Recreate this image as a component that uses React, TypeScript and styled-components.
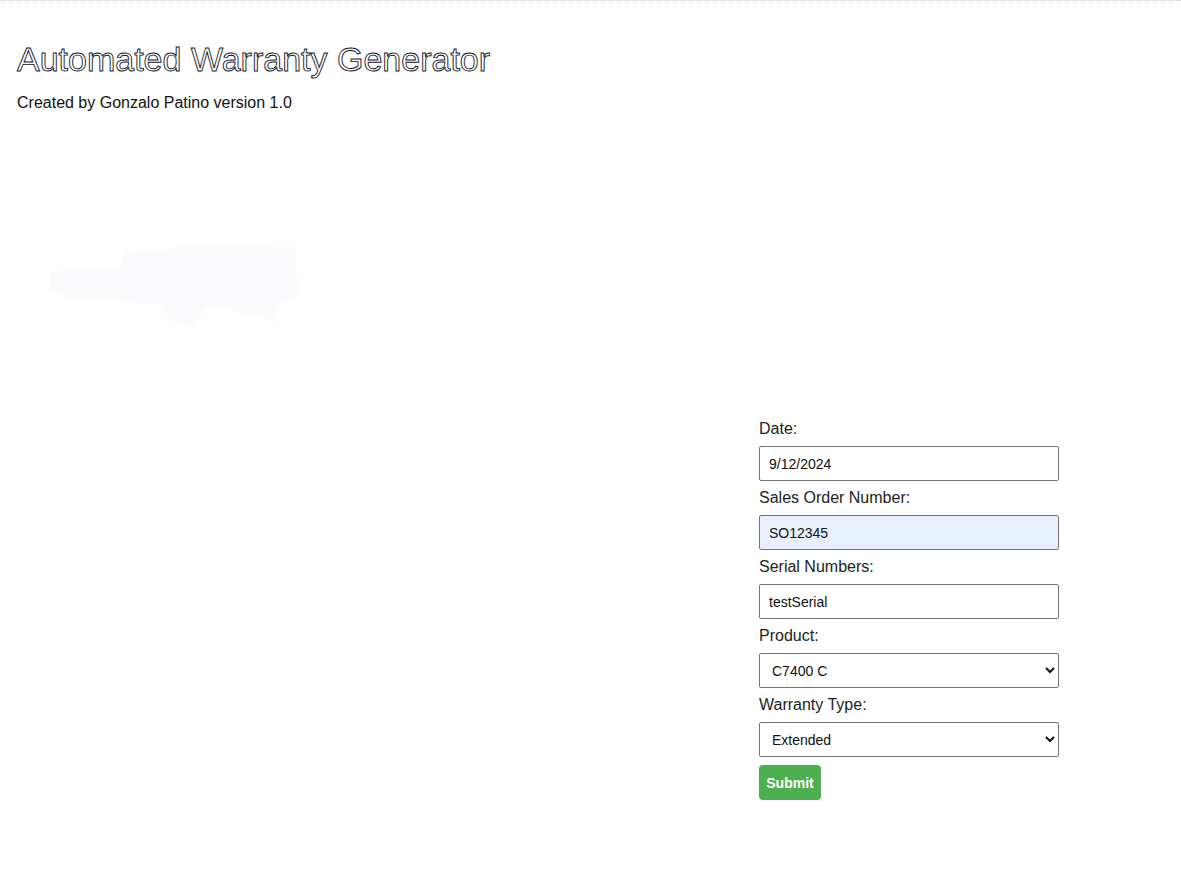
import React from 'react';
import styled, { createGlobalStyle } from 'styled-components';

const GlobalStyle = createGlobalStyle`
  html, body {
    margin: 0;
    padding: 0;
    background: #fff;
  }
  body {
    font-family: "Liberation Sans", Arial, sans-serif;
    color: #222;
    border-top: 1px dotted #c8c8c8;
  }
`;

const Page = styled.div`
  padding: 0 17px;
  min-height: 875px;
  box-sizing: border-box;
`;

const Header = styled.header`
  padding-top: 39px;
`;

const Title = styled.h1`
  margin: 0;
  font-size: 34px;
  line-height: 39px;
  font-weight: normal;
  color: #fff;
  -webkit-text-stroke: 0.9px #10102a;
`;

const Subtitle = styled.p`
  margin: 15px 0 0;
  font-size: 16px;
  line-height: 18px;
  color: #111;
`;

const Main = styled.main`
  display: flex;
  justify-content: space-between;
  align-items: flex-start;
`;

const LogoBox = styled.div`
  margin: 131px 0 0 28px;
  width: 256px;
  height: 90px;
`;

const Form = styled.form`
  margin: 308px 105px 0 0;
  width: 300px;
  display: flex;
  flex-direction: column;
`;

const Label = styled.label`
  font-size: 16px;
  line-height: 18px;
  color: #222;
  margin-bottom: 8px;
`;

const fieldBase = `
  box-sizing: border-box;
  width: 300px;
  height: 35px;
  margin: 0 0 8px;
  border: 1px solid #767676;
  border-radius: 2px;
  font-family: "Liberation Sans", Arial, sans-serif;
  font-size: 14px;
  color: #111;
  outline: none;
`;

const Input = styled.input<{ $autofill?: boolean }>`
  ${fieldBase}
  padding: 0 9px;
  background: ${(p) => (p.$autofill ? '#e8f0fe' : '#fff')};
`;

const Select = styled.select`
  ${fieldBase}
  padding: 0 8px;
  background: #fff;
`;

const SubmitButton = styled.button`
  align-self: flex-start;
  width: 62px;
  height: 35px;
  border: none;
  border-radius: 4px;
  background: #4caf50;
  color: #fff;
  font-family: "Liberation Sans", Arial, sans-serif;
  font-size: 14px;
  font-weight: bold;
  cursor: pointer;
`;

const Logo = () => (
  <svg width="256" height="90" viewBox="0 0 256 90">
    <path
      d="M5 28 L75 26 L80 8 L130 6 L135 2 L250 4 L250 30 L258 42 L250 58 L235 60 L230 80 L210 70 L200 72 L180 62 L160 65 L150 85 L125 78 L115 62 L70 58 L25 56 L5 46 Z"
      fill="#fcfcfe"
    />
  </svg>
);

const App: React.FC = () => {
  return (
    <Page>
      <GlobalStyle />
      <Header>
        <Title>Automated Warranty Generator</Title>
        <Subtitle>Created by Gonzalo Patino version 1.0</Subtitle>
      </Header>
      <Main>
        <LogoBox>
          <Logo />
        </LogoBox>
        <Form onSubmit={(e) => e.preventDefault()}>
          <Label htmlFor="date">Date:</Label>
          <Input id="date" type="text" defaultValue="9/12/2024" />
          <Label htmlFor="so">Sales Order Number:</Label>
          <Input id="so" type="text" defaultValue="SO12345" $autofill />
          <Label htmlFor="serial">Serial Numbers:</Label>
          <Input id="serial" type="text" defaultValue="testSerial" />
          <Label htmlFor="product">Product:</Label>
          <Select id="product" defaultValue="C7400 C">
            <option>C7400 C</option>
            <option>C7400 S</option>
          </Select>
          <Label htmlFor="wtype">Warranty Type:</Label>
          <Select id="wtype" defaultValue="Extended">
            <option>Standard</option>
            <option>Extended</option>
          </Select>
          <SubmitButton type="submit">Submit</SubmitButton>
        </Form>
      </Main>
    </Page>
  );
};

export default App;
